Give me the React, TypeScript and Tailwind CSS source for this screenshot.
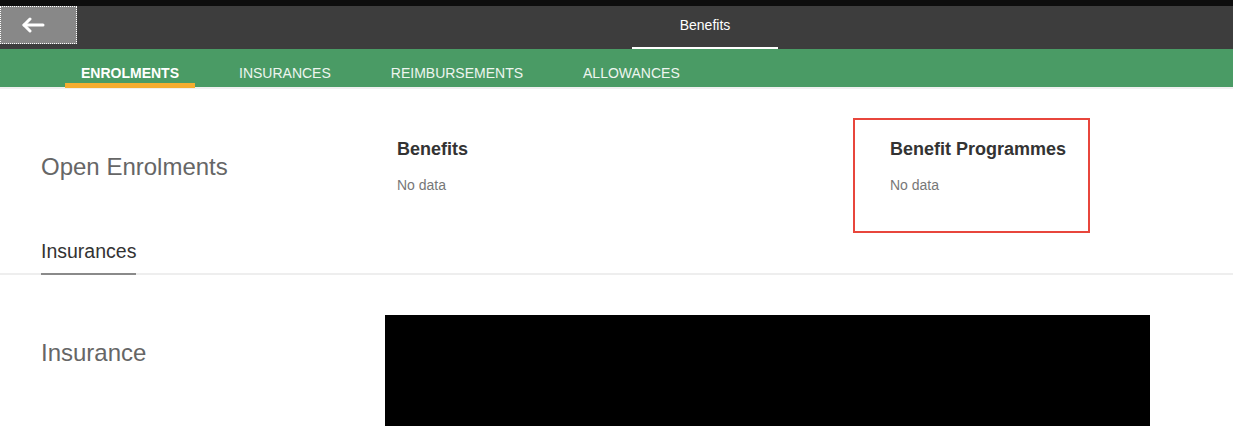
const tabs = ["ENROLMENTS", "INSURANCES", "REIMBURSEMENTS", "ALLOWANCES"];

const BackArrow = () => (
  <svg width="24" height="16" viewBox="0 0 24 16" fill="none" stroke="white" strokeWidth="3" strokeLinecap="round" strokeLinejoin="round">
    <path d="M22 8H3" />
    <path d="M9 2L3 8l6 6" />
  </svg>
);

const App = () => {
  return (
    <div className="w-[1233px] h-[426px] overflow-hidden bg-white font-['Liberation_Sans',Arial,sans-serif]">
      <div className="h-[6px] bg-[#0d0d0d]" />
      <header className="relative h-[43px] bg-[#3d3d3d] flex pl-[632px]">
        <button className="absolute left-0 top-0 w-[77px] h-[38px] bg-[#888888] border border-dotted border-white flex items-center pl-[20px]">
          <BackArrow />
        </button>
        <div className="w-[146px] flex flex-col items-center">
          <span className="mt-[11px] text-[14px] leading-[17px] text-white">Benefits</span>
          <div className="mt-auto h-[2px] w-full bg-white" />
        </div>
      </header>
      <nav className="h-[38px] bg-[#4a9b65] flex pl-[65px] border-b-2 border-[#f0f0f0] box-content">
        {tabs.map((t, i) => (
          <div
            key={t}
            className={
              i === 0
                ? "w-[130px] mr-[14px] flex flex-col items-center text-white font-bold text-[14px]"
                : "px-[30px] flex flex-col items-center text-[#eef5ef] text-[14px]"
            }
          >
            <span className="mt-[16px] leading-[17px]">{t}</span>
            {i === 0 && <div className="mt-auto h-[5px] w-full bg-[#f5ad30] translate-y-[1px]" />}
          </div>
        ))}
      </nav>

      <section className="flex pl-[41px] pt-[29px] h-[147px]">
        <div className="w-[356px] pt-[35px]">
          <h2 className="text-[24px] leading-[28px] text-[#666666]">Open Enrolments</h2>
        </div>
        <div className="w-[456px] pt-[20px]">
          <h3 className="text-[18px] leading-[22px] font-bold text-[#333333]">Benefits</h3>
          <p className="mt-[17px] text-[14px] leading-[16px] text-[#777777]">No data</p>
        </div>
        <div className="w-[237px] h-[115px] border-2 border-[#e8463c] pl-[35px] pt-[18px]">
          <h3 className="text-[18px] leading-[22px] font-bold text-[#333333]">Benefit Programmes</h3>
          <p className="mt-[17px] text-[14px] leading-[16px] text-[#777777]">No data</p>
        </div>
      </section>

      <div className="border-b-2 border-[#eeeeee] pl-[41px] pt-[3px]">
        <div className="inline-block pb-[8px] border-b-2 border-[#8a8a8a] -mb-[2px]">
          <span className="text-[19.5px] leading-[24px] text-[#333333]">Insurances</span>
        </div>
      </div>

      <section className="flex pl-[41px] pt-[40px]">
        <div className="w-[344px] pt-[24px]">
          <h2 className="text-[24px] leading-[28px] text-[#666666]">Insurance</h2>
        </div>
        <div className="w-[765px] h-[120px] bg-black" />
      </section>
    </div>
  );
};

export default App;
